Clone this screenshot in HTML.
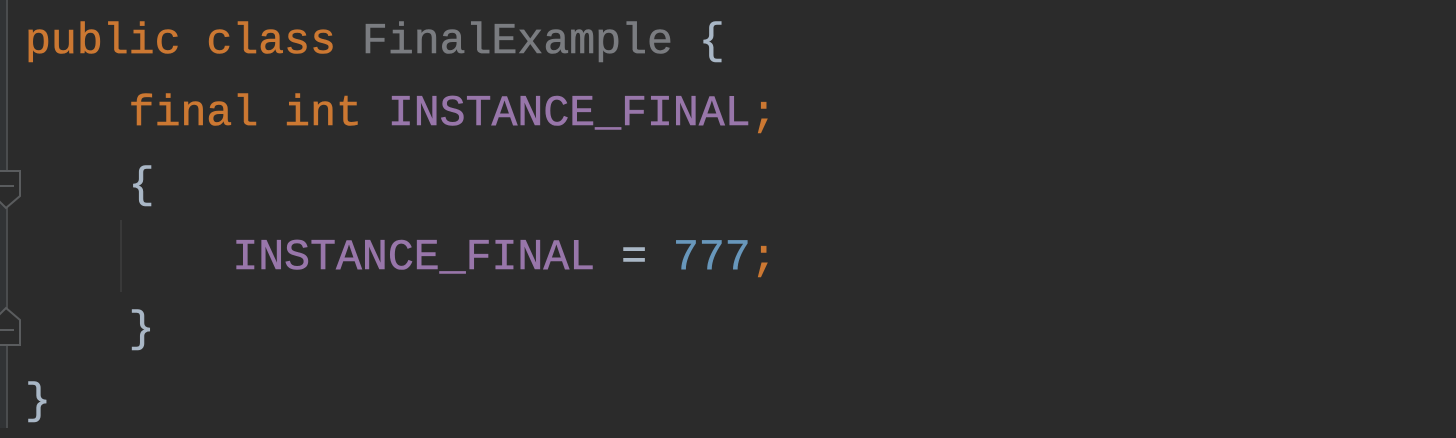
<!DOCTYPE html>
<html><head><style>
html,body{margin:0;padding:0;width:1456px;height:428px;overflow:hidden;background:#2b2b2b;}
.g{position:absolute;left:0;top:0;width:6px;height:428px;background:#313335;}
.gl{position:absolute;left:6px;top:0;width:2px;height:428px;background:#4a4c4e;}
.code{position:absolute;left:25px;top:6px;font-family:"Liberation Mono",monospace;font-size:43.2px;line-height:72px;white-space:pre;color:#a9b7c6;-webkit-text-stroke:0.6px currentColor;}
.k{color:#cc7832}.c{color:#7a7c80}.p{color:#9876aa}.n{color:#6897bb}
.guide{position:absolute;left:120px;top:220px;width:2px;height:72px;background:#393939;}
</style></head><body>
<div class="g"></div><div class="gl"></div>
<svg style="position:absolute;left:0;top:0" width="30" height="428">
<path d="M-1 171 H20 V196 L6 208 L-1 201 Z" fill="#2b2b2b" stroke="#5a5c5e" stroke-width="2"/>
<line x1="0" y1="186" x2="14" y2="186" stroke="#5a5c5e" stroke-width="2"/>
<path d="M-1 345 H20 V320 L6 308 L-1 315 Z" fill="#2b2b2b" stroke="#5a5c5e" stroke-width="2"/>
<line x1="0" y1="330" x2="14" y2="330" stroke="#5a5c5e" stroke-width="2"/>
</svg>
<div class="guide"></div>
<div class="code"><span class="k">public class </span><span class="c">FinalExample</span> {
    <span class="k">final int </span><span class="p">INSTANCE_FINAL</span><span class="k">;</span>
    {
        <span class="p">INSTANCE_FINAL</span> = <span class="n">777</span><span class="k">;</span>
    }
}</div>
</body></html>
